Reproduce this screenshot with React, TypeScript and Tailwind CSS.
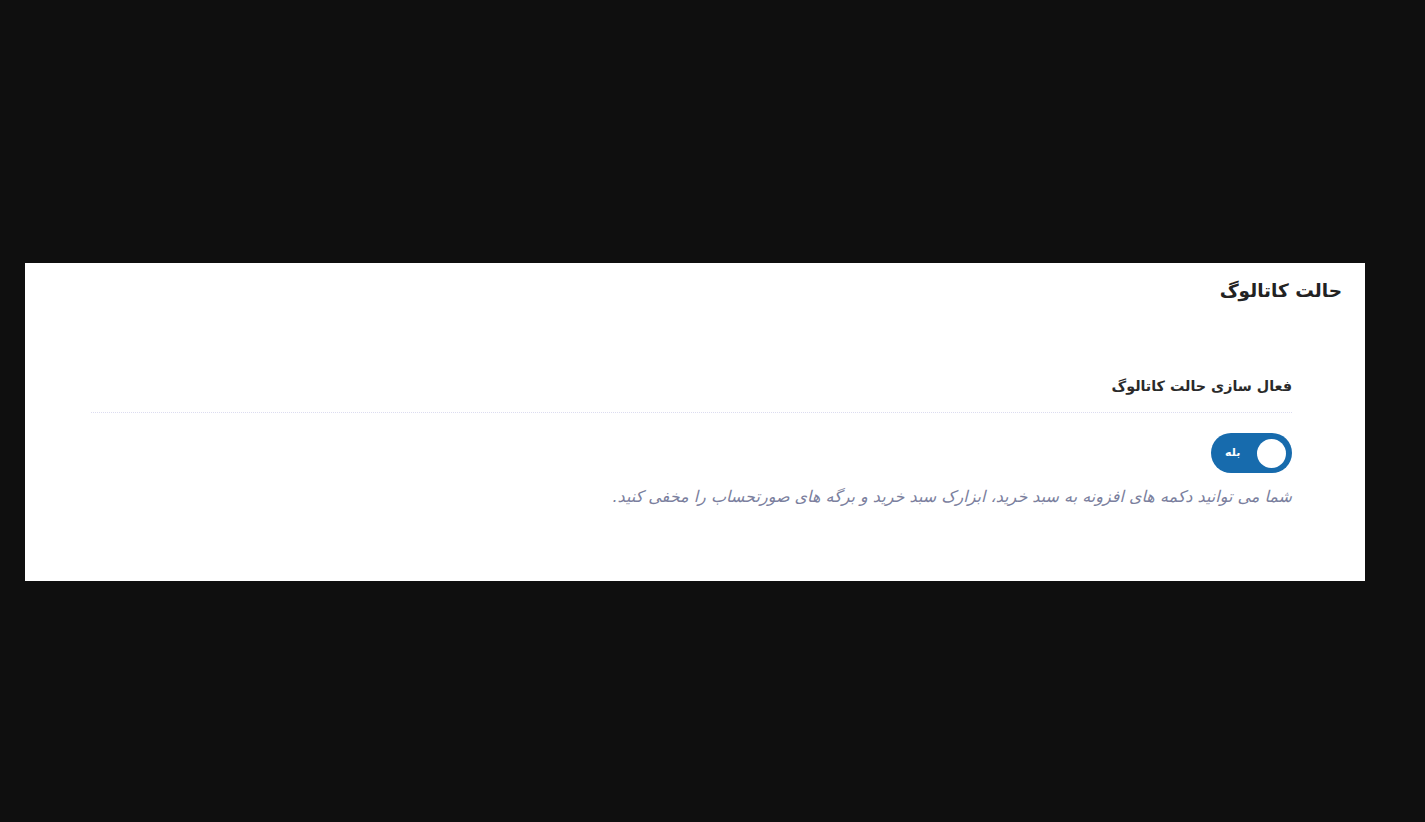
import { useState } from "react";

export default function App() {
  const [enabled, setEnabled] = useState(true)

  return (
    <div className="min-h-[822px] w-full bg-[#0f0f0f] pt-[263px] pl-[25px] pr-[60px]" style={{ fontFamily: '"DejaVu Sans", "Noto Sans", sans-serif' }}>
      <div dir="rtl" className="h-[318px] w-[1340px] bg-white">
        <h2 className="pr-[23px] pt-[16px] text-[18.5px] font-bold leading-[24px] text-[#222]">
          حالت کاتالوگ
        </h2>
        <div className="mr-[73px] ml-[66px] mt-[71px]">
          <div className="border-b border-dotted border-[#dcdcf0] pb-[14px]">
            <span className="text-[14.3px] font-bold leading-[20px] text-[#2a2a2a]">فعال سازی حالت کاتالوگ</span>
          </div>
          <div className="pt-[20px]">
            <button
              type="button"
              onClick={() => setEnabled(!enabled)}
              className="flex h-[40px] w-[81px] items-center justify-between rounded-full bg-[#176bad] px-[6px]"
            >
              <span className="size-[29px] rounded-full bg-white" />
              <span className="ml-[8px] text-[11px] font-bold text-white">{enabled ? 'بله' : 'خیر'}</span>
            </button>
          </div>
          <p className="mt-[14px] text-[16px] italic leading-[20px] text-[#7b7f9e]">
            شما می توانید دکمه های افزونه به سبد خرید، ابزارک سبد خرید و برگه های صورتحساب را مخفی کنید.
          </p>
        </div>
      </div>
    </div>
  )
}
